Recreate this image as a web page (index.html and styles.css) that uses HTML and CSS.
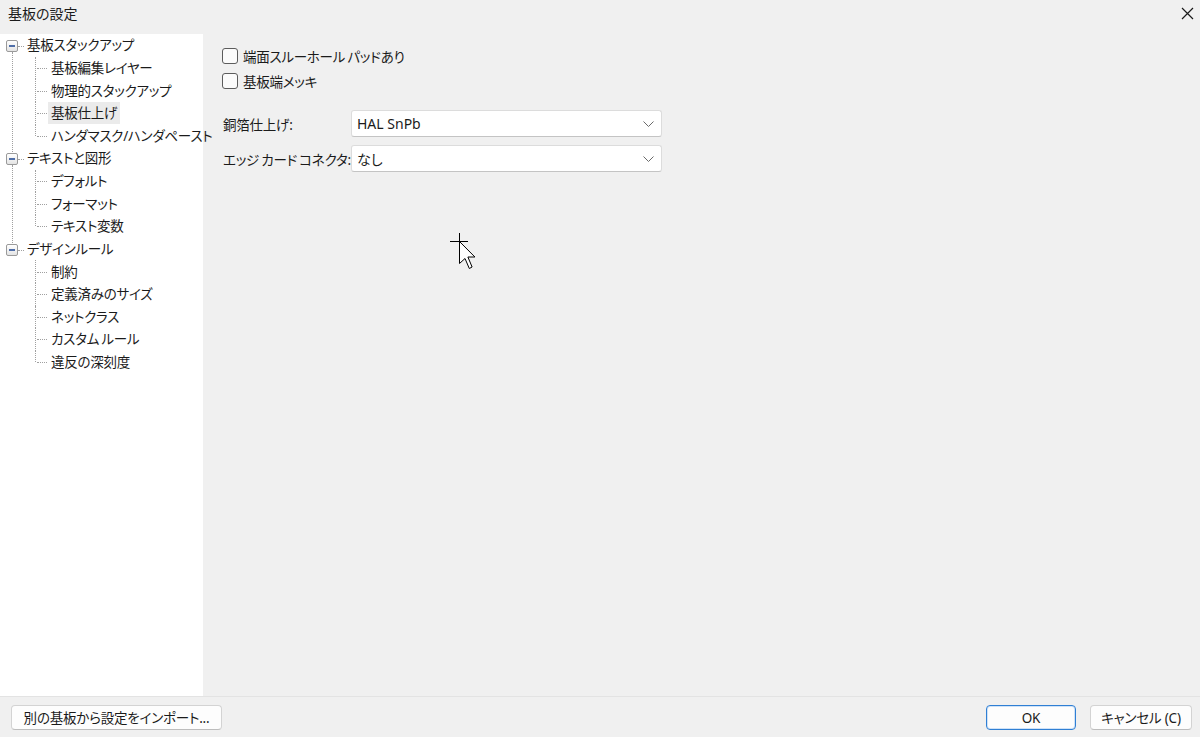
FILE: index.html
```html
<!DOCTYPE html>
<html lang="ja">
<head>
<meta charset="utf-8">
<title>基板の設定</title>
<link rel="stylesheet" href="styles.css">
</head>
<body>
<div class="window">
  <div class="titlebar">
    <span class="title">基板の設定</span>
    <svg class="close" width="13" height="13" viewBox="0 0 13 13"><path d="M1 1 L12 12 M12 1 L1 12" stroke="#1a1a1a" stroke-width="1.2" fill="none"/></svg>
  </div>
  <div class="main">
    <nav class="tree">
      <div class="group">
        <div class="group-row"><span class="expander"></span><span class="label">基板スタックアップ</span></div>
        <ul class="leaves">
          <li class="leaf"><span class="label">基板編集レイヤー</span></li>
          <li class="leaf"><span class="label">物理的スタックアップ</span></li>
          <li class="leaf"><span class="label selected">基板仕上げ</span></li>
          <li class="leaf"><span class="label">ハンダマスク/ハンダペースト</span></li>
        </ul>
      </div>
      <div class="group">
        <div class="group-row"><span class="expander"></span><span class="label">テキストと図形</span></div>
        <ul class="leaves">
          <li class="leaf"><span class="label">デフォルト</span></li>
          <li class="leaf"><span class="label">フォーマット</span></li>
          <li class="leaf"><span class="label">テキスト変数</span></li>
        </ul>
      </div>
      <div class="group last">
        <div class="group-row"><span class="expander"></span><span class="label">デザインルール</span></div>
        <ul class="leaves">
          <li class="leaf"><span class="label">制約</span></li>
          <li class="leaf"><span class="label">定義済みのサイズ</span></li>
          <li class="leaf"><span class="label">ネットクラス</span></li>
          <li class="leaf"><span class="label">カスタム ルール</span></li>
          <li class="leaf"><span class="label">違反の深刻度</span></li>
        </ul>
      </div>
    </nav>
    <section class="content">
      <label class="check"><span class="box"></span><span>端面スルーホール パッドあり</span></label>
      <label class="check"><span class="box"></span><span>基板端メッキ</span></label>
      <div class="fields">
        <span class="field-label">銅箔仕上げ:</span>
        <div class="select"><span>HAL SnPb</span><svg width="11" height="6" viewBox="0 0 11 6"><path d="M0.5 0.5 L5.5 5.5 L10.5 0.5" stroke="#6a6a6a" stroke-width="1" fill="none"/></svg></div>
        <span class="field-label">エッジ カード コネクタ:</span>
        <div class="select"><span>なし</span><svg width="11" height="6" viewBox="0 0 11 6"><path d="M0.5 0.5 L5.5 5.5 L10.5 0.5" stroke="#6a6a6a" stroke-width="1" fill="none"/></svg></div>
      </div>
    </section>
  </div>
  <div class="footer">
    <button class="btn import">別の基板から設定をインポート...</button>
    <div class="actions">
      <button class="btn ok">OK</button>
      <button class="btn cancel">キャンセル (C)</button>
    </div>
  </div>
  <svg class="cursor" width="28" height="40" viewBox="0 0 28 40">
    <path d="M9.5 8.5 L9.5 30.5 L15 25.5 L19.3 35.5 L22.1 34 L17.9 24 L24.9 24 Z" fill="#fff" stroke="#000" stroke-width="1" stroke-linejoin="miter"/>
    <path d="M0 8.5 H18 M9.5 0 V17" stroke="#000" stroke-width="1" fill="none"/>
  </svg>
</div>
</body>
</html>
```

FILE: styles.css
```css
* { box-sizing: border-box; }
html, body { margin: 0; padding: 0; }
body {
  background: #f0f0f0;
  font-family: "Noto Sans", "Noto Sans CJK JP", sans-serif;
  font-size: 13.5px;
  letter-spacing: -0.25px;
  word-spacing: -1px;
  color: #1b1b1b;
  font-feature-settings: "palt";
}
.window {
  position: relative;
  width: 1200px;
  height: 737px;
  display: flex;
  flex-direction: column;
  background: #f0f0f0;
  overflow: hidden;
}
.titlebar {
  height: 28px;
  display: flex;
  align-items: center;
  justify-content: space-between;
  padding: 0 6px 0 8px;
  flex: none;
}
.title { font-size: 14px; line-height: 28px; letter-spacing: 0; }
.close { margin-top: -1px; }

.main {
  flex: 1;
  display: flex;
  padding-top: 6px;
  min-height: 0;
}
.tree {
  width: 203px;
  background: #fff;
  flex: none;
  padding-top: 0;
}
.group { position: relative; }
.group:not(.last)::before {
  content: "";
  position: absolute;
  left: 12px;
  top: 18px;
  bottom: -7px;
  border-left: 1px dotted #a0a0a0;
}
.group-row {
  height: 22.64px;
  display: flex;
  align-items: center;
  padding-left: 6px;
}
.expander {
  position: relative;
  width: 12px;
  height: 12px;
  margin-top: 2px;
  margin-right: 9px;
  border: 1px solid #9a9a9a;
  border-radius: 2px;
  background: linear-gradient(#ffffff, #e4e4e4);
  flex: none;
}
.expander::before {
  content: "";
  position: absolute;
  left: 2px;
  right: 2px;
  top: 4px;
  height: 2px;
  background: #4f6ea8;
}
.expander::after {
  content: "";
  position: absolute;
  left: 11px;
  top: 5px;
  width: 6px;
  border-top: 1px dotted #a0a0a0;
}
.label {
  white-space: nowrap;
  line-height: 22px;
}
.leaves { list-style: none; margin: 0; padding: 0; }
.leaf {
  position: relative;
  height: 22.64px;
  display: flex;
  align-items: center;
  padding-left: 48px;
}
.leaf::before {
  content: "";
  position: absolute;
  left: 35px;
  top: 0;
  height: 100%;
  border-left: 1px dotted #a0a0a0;
}
.leaf:last-child::before { height: 50%; }
.leaf::after {
  content: "";
  position: absolute;
  left: 37px;
  top: 50%;
  width: 10px;
  border-top: 1px dotted #a0a0a0;
}
.leaf .label { padding: 0 3px; }
.label.selected { background: #ebebeb; }

.content {
  flex: 1;
  padding: 9px 0 0 19px;
}
.check {
  display: flex;
  align-items: center;
  height: 25px;
  gap: 5px;
}
.box {
  width: 16px;
  height: 16px;
  border: 1px solid #5c5c5c;
  border-radius: 3px;
  background: #fbfbfb;
  flex: none;
}
.fields {
  margin-top: 17px;
  display: grid;
  grid-template-columns: 129px 311px;
  row-gap: 8px;
  align-items: center;
}
.field-label { padding-left: 1px; white-space: nowrap; }
.select {
  height: 27px;
  display: flex;
  align-items: center;
  justify-content: space-between;
  padding: 0 7px 0 5px;
  background: #fff;
  border: 1px solid #dcdcdc;
  border-bottom-color: #c4c4c4;
  border-radius: 3px;
  font-size: 14px;
  letter-spacing: 0;
  word-spacing: 0;
}
.select svg { flex: none; }

.footer {
  height: 41px;
  flex: none;
  border-top: 1px solid #e3e3e3;
  display: flex;
  justify-content: space-between;
  align-items: flex-start;
  padding: 8px 8px 0 11px;
}
.actions { display: flex; gap: 14px; }
.btn {
  height: 25px;
  font-family: "Noto Sans", "Noto Sans CJK JP", sans-serif;
  font-size: 13.5px;
  letter-spacing: -0.2px;
  font-feature-settings: "palt";
  color: #1b1b1b;
  background: #fdfdfd;
  border: 1px solid #d3d3d3;
  border-bottom-color: #bdbdbd;
  border-radius: 4px;
  padding: 0;
  line-height: 22px;
}
.import { width: 211px; }
.ok {
  width: 90px;
  border: 1px solid #2f7fd4;
  box-shadow: inset 0 0 0 1px #cfe2f7;
}
.cancel { width: 102px; }

.cursor {
  position: absolute;
  left: 450px;
  top: 233px;
}
```
